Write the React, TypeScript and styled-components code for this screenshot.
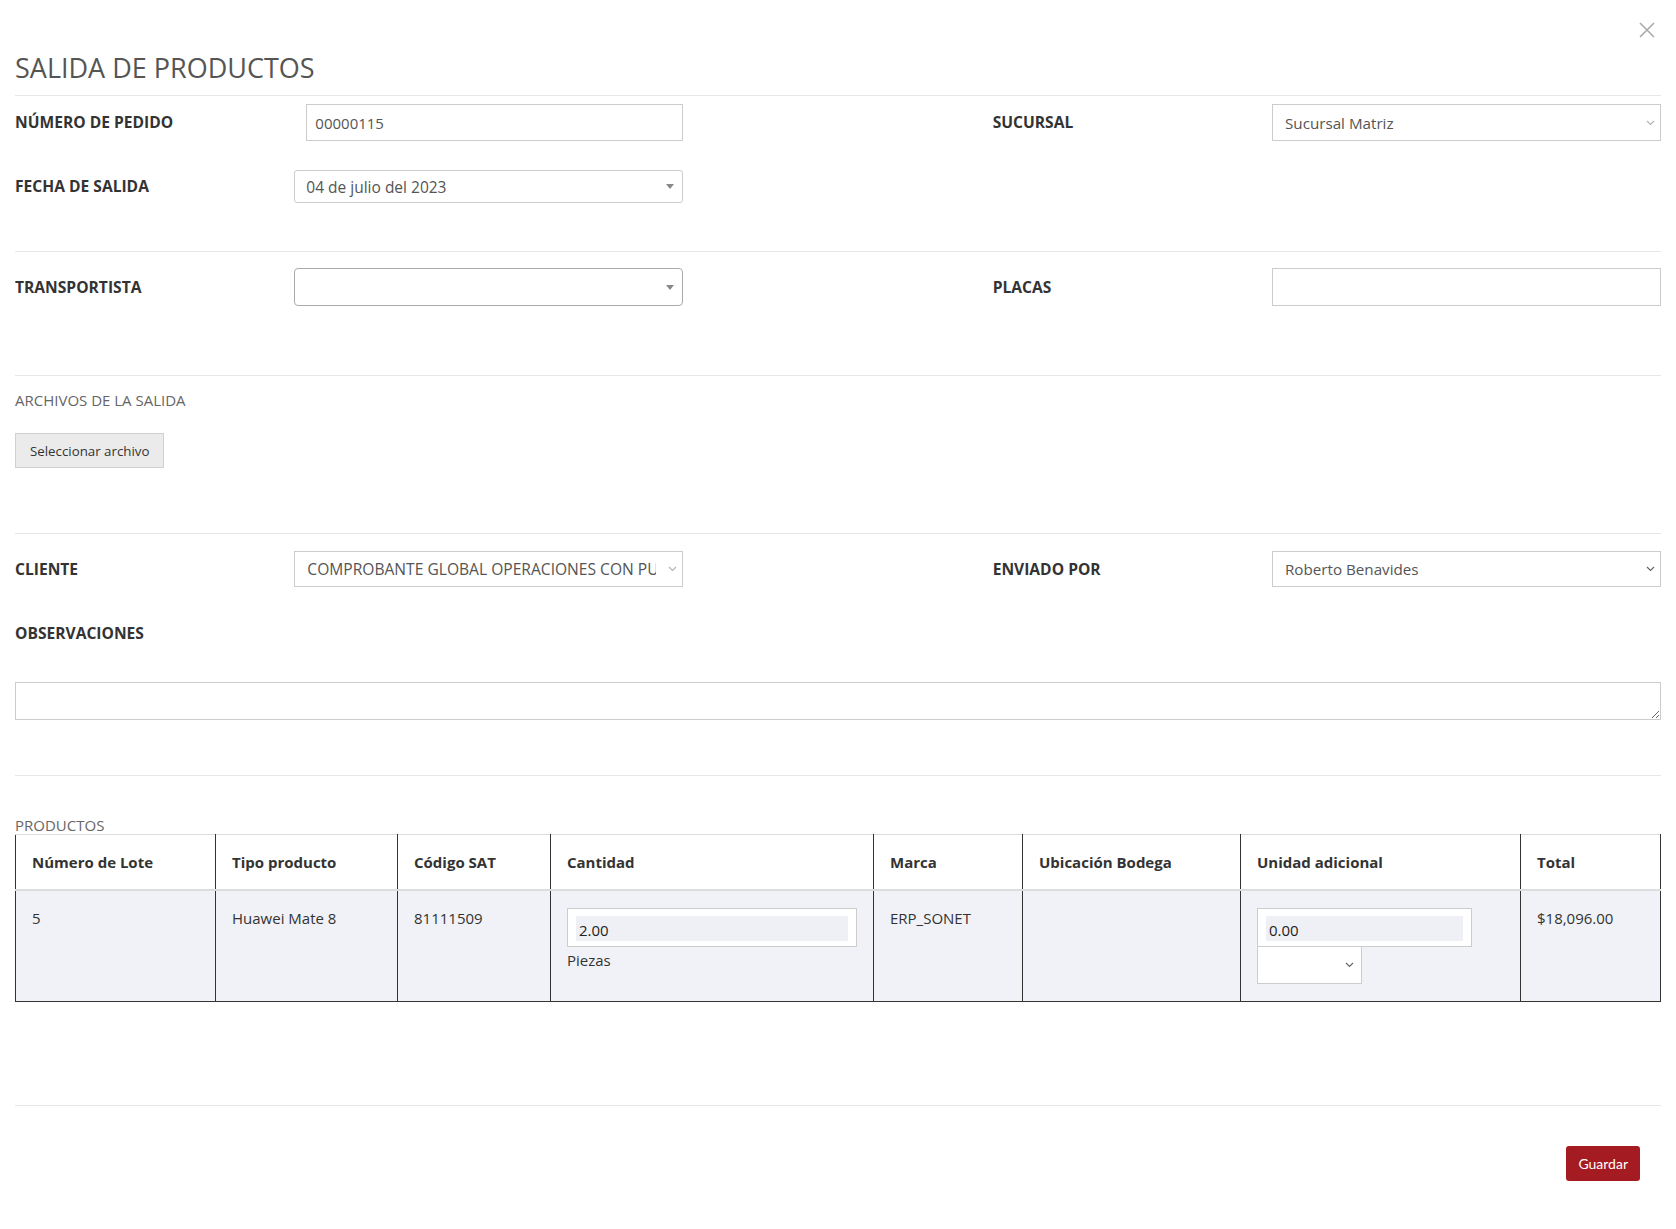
import React from 'react';
import styled, { createGlobalStyle } from 'styled-components';

const GlobalStyle = createGlobalStyle`
  html, body {
    margin: 0;
    padding: 0;
    background: #fff;
  }
  body {
    font-family: 'Open Sans', 'Liberation Sans', sans-serif;
    font-size: 15px;
    color: #333;
  }
  * {
    box-sizing: border-box;
  }
`;

export default function App() {
  return (
    <>
      <GlobalStyle />
      <S_Modal>
        <S_Close aria-label="Cerrar">
          <svg width="16" height="16" viewBox="0 0 16 16">
            <path d="M1 1 L15 15 M15 1 L1 15" stroke="#aaa" strokeWidth="1.6" />
          </svg>
        </S_Close>
        <S_Title>SALIDA DE PRODUCTOS</S_Title>
        <S_Divider $top={9} />

        {/* ------------ datos generales ------------ */}
        <S_FormRow $top={8}>
          <S_Label>NÚMERO DE PEDIDO</S_Label>
          <S_Field $col={3} $indent={12}>
            <S_Input $h={37} defaultValue="00000115" />
          </S_Field>
          <S_Label $right>SUCURSAL</S_Label>
          <S_Field $col={10}>
            <S_SelectBox $h={37}>
              <span>Sucursal Matriz</span>
              <Chevron light />
            </S_SelectBox>
          </S_Field>
        </S_FormRow>
        <S_FormRow $top={29}>
          <S_Label>FECHA DE SALIDA</S_Label>
          <S_Field $col={3}>
            <S_Select2 $h={33}>
              <span>04 de julio del 2023</span>
              <S_Caret />
            </S_Select2>
          </S_Field>
        </S_FormRow>
        <S_Divider $top={48} />

        <S_FormRow $top={16}>
          <S_Label>TRANSPORTISTA</S_Label>
          <S_Field $col={3}>
            <S_Select2 $h={38} $round>
              <span />
              <S_Caret />
            </S_Select2>
          </S_Field>
          <S_Label $right>PLACAS</S_Label>
          <S_Field $col={10}>
            <S_Input $h={38} defaultValue="" />
          </S_Field>
        </S_FormRow>
        <S_Divider $top={69} />

        {/* ------------ archivos ------------ */}
        <S_SectionTitle $top={15}>ARCHIVOS DE LA SALIDA</S_SectionTitle>
        <S_FileButton type="button">Seleccionar archivo</S_FileButton>
        <S_Divider $top={65} />

        {/* ------------ cliente ------------ */}
        <S_FormRow $top={17}>
          <S_Label>CLIENTE</S_Label>
          <S_Field $col={3}>
            <S_SelectBox $h={36}>
              <S_Clip>COMPROBANTE GLOBAL OPERACIONES CON PUBLICO EN GENERAL</S_Clip>
              <Chevron light />
            </S_SelectBox>
          </S_Field>
          <S_Label $right>ENVIADO POR</S_Label>
          <S_Field $col={10}>
            <S_SelectBox $h={36}>
              <span>Roberto Benavides</span>
              <Chevron />
            </S_SelectBox>
          </S_Field>
        </S_FormRow>
        <S_BlockLabel $top={36}>OBSERVACIONES</S_BlockLabel>
        <S_TextArea rows={1} defaultValue="" />
        <S_Divider $top={55} />

        {/* ------------ productos ------------ */}
        <S_SectionTitle $top={40}>PRODUCTOS</S_SectionTitle>
        <S_Table>
          <colgroup>
            <col style={{ width: 200 }} />
            <col style={{ width: 182 }} />
            <col style={{ width: 153 }} />
            <col style={{ width: 323 }} />
            <col style={{ width: 149 }} />
            <col style={{ width: 218 }} />
            <col style={{ width: 280 }} />
            <col style={{ width: 140 }} />
          </colgroup>
          <thead>
            <tr>
              <S_Th>Número de Lote</S_Th>
              <S_Th>Tipo producto</S_Th>
              <S_Th>Código SAT</S_Th>
              <S_Th>Cantidad</S_Th>
              <S_Th>Marca</S_Th>
              <S_Th>Ubicación Bodega</S_Th>
              <S_Th>Unidad adicional</S_Th>
              <S_Th>Total</S_Th>
            </tr>
          </thead>
          <tbody>
            <tr>
              <S_Td>5</S_Td>
              <S_Td>Huawei Mate 8</S_Td>
              <S_Td>81111509</S_Td>
              <S_Td>
                <S_QtyBox>
                  <S_QtyValue>2.00</S_QtyValue>
                </S_QtyBox>
                <S_Unit>Piezas</S_Unit>
              </S_Td>
              <S_Td>ERP_SONET</S_Td>
              <S_Td />
              <S_Td>
                <S_QtyBox $w={215}>
                  <S_QtyValue>0.00</S_QtyValue>
                </S_QtyBox>
                <S_MiniSelect>
                  <Chevron />
                </S_MiniSelect>
              </S_Td>
              <S_Td>$18,096.00</S_Td>
            </tr>
          </tbody>
        </S_Table>
        <S_Divider $top={103} />

        <S_Footer>
          <S_SaveButton type="button">Guardar</S_SaveButton>
        </S_Footer>
      </S_Modal>
    </>
  );
}

const Chevron = ({ light }: { light?: boolean }) => (
  <svg width="9" height="6" viewBox="0 0 9 6">
    <path
      d="M1 1 L4.5 4.5 L8 1"
      fill="none"
      stroke={light ? '#b5b5b5' : '#666'}
      strokeWidth="1.2"
    />
  </svg>
);

// ------------ スタイル設定 ------------
const S_Modal = styled.div`
  position: relative;
  width: 1676px;
  min-height: 1229px;
  padding: 0 15px 48px;
`;

const S_Close = styled.button`
  position: absolute;
  top: 22px;
  right: 21px;
  padding: 0;
  border: 0;
  background: transparent;
  line-height: 0;
  cursor: pointer;
`;

const S_Title = styled.h4`
  margin: 0;
  padding-top: 50px;
  font-size: 27px;
  line-height: 36px;
  font-weight: 400;
  color: #555;
`;

const S_Divider = styled.hr<{ $top: number }>`
  margin: ${(p) => p.$top}px 0 0;
  border: 0;
  border-top: 1px solid #e6e6e6;
`;

const S_FormRow = styled.div<{ $top: number }>`
  display: grid;
  grid-template-columns: repeat(12, 1fr);
  column-gap: 30px;
  align-items: center;
  margin-top: ${(p) => p.$top}px;
`;

const S_Label = styled.label<{ $right?: boolean }>`
  grid-column: ${(p) => (p.$right ? '8 / span 2' : '1 / span 2')};
  font-weight: 700;
  font-size: 15.6px;
  line-height: 20px;
  color: #333;
  padding-bottom: 1px;
`;

const S_Field = styled.div<{ $col: number; $indent?: number }>`
  grid-column: ${(p) => p.$col} / span 3;
  padding-left: ${(p) => p.$indent ?? 0}px;
`;

const S_Input = styled.input<{ $h: number }>`
  display: block;
  width: 100%;
  height: ${(p) => p.$h}px;
  padding: 0 8px;
  border: 1px solid #ccc;
  border-radius: 0;
  font-family: inherit;
  font-size: 15px;
  color: #555;
  background: #fff;
  outline: none;
`;

const S_SelectBox = styled.div<{ $h: number }>`
  display: flex;
  align-items: center;
  justify-content: space-between;
  gap: 12px;
  height: ${(p) => p.$h}px;
  padding: 0 5px 0 12px;
  border: 1px solid #ccc;
  font-size: 15.2px;
  color: #555;
  background: #fff;
`;

const S_Clip = styled.span`
  flex: 1;
  overflow: hidden;
  white-space: nowrap;
  font-size: 15.6px;
`;

const S_Select2 = styled.div<{ $h: number; $round?: boolean }>`
  display: flex;
  align-items: center;
  justify-content: space-between;
  height: ${(p) => p.$h}px;
  padding: 0 8px 0 11px;
  border: 1px solid ${(p) => (p.$round ? '#aaa' : '#ccc')};
  border-radius: ${(p) => (p.$round ? 4 : 3)}px;
  font-size: 15.5px;
  color: #555;
  background: #fff;
`;

const S_Caret = styled.span`
  width: 0;
  height: 0;
  border-left: 4px solid transparent;
  border-right: 4px solid transparent;
  border-top: 5px solid #888;
`;

const S_SectionTitle = styled.div<{ $top: number }>`
  margin-top: ${(p) => p.$top}px;
  font-size: 15px;
  line-height: 18px;
  color: #666;
`;

const S_FileButton = styled.button`
  display: block;
  margin-top: 24px;
  height: 35px;
  padding: 0 14px;
  border: 1px solid #d0d0d0;
  background: #ebebeb;
  font-family: inherit;
  font-size: 13.3px;
  color: #333;
`;

const S_BlockLabel = styled.div<{ $top: number }>`
  margin-top: ${(p) => p.$top}px;
  font-weight: 700;
  font-size: 15.6px;
  line-height: 20px;
  color: #333;
`;

const S_TextArea = styled.textarea`
  display: block;
  width: 100%;
  height: 38px;
  margin-top: 39px;
  border: 1px solid #ccc;
  font-family: inherit;
  font-size: 15px;
  resize: vertical;
  outline: none;
`;

const S_Table = styled.table`
  width: 100%;
  table-layout: fixed;
  border-collapse: collapse;
  margin-top: 0;
  font-size: 15px;
  color: #333;
`;

const S_Th = styled.th`
  height: 55px;
  padding: 0 16px;
  text-align: left;
  font-weight: 700;
  border-top: 1px solid #ddd;
  border-left: 1px solid #333;
  border-right: 1px solid #333;
  border-bottom: 2px solid #ddd;
`;

const S_Td = styled.td`
  height: 110px;
  padding: 17px 16px;
  vertical-align: top;
  background: #f0f2f7;
  border: 1px solid #333;
  border-top: 0;
  line-height: 20px;
`;

const S_QtyBox = styled.div<{ $w?: number }>`
  width: ${(p) => (p.$w ? `${p.$w}px` : '100%')};
  height: 39px;
  padding: 7px 8px;
  border: 1px solid #ccc;
  background: #fff;
`;

const S_QtyValue = styled.div`
  height: 25px;
  padding: 2px 3px;
  background: #eef0f5;
  font-size: 15px;
  line-height: 24px;
  color: #222;
`;

const S_Unit = styled.div`
  margin-top: 3px;
  font-size: 15px;
`;

const S_MiniSelect = styled.div`
  display: flex;
  align-items: center;
  justify-content: flex-end;
  width: 105px;
  height: 37px;
  padding-right: 7px;
  border: 1px solid #ccc;
  border-top: 0;
  background: #fff;
`;

const S_Footer = styled.div`
  display: flex;
  justify-content: flex-end;
  margin-top: 40px;
  padding-right: 21px;
`;

const S_SaveButton = styled.button`
  height: 35px;
  padding: 0 12px;
  border: 0;
  border-radius: 3px;
  background: #a51b22;
  color: #fff;
  font-family: Lato, 'Open Sans', sans-serif;
  font-size: 14px;
`;
